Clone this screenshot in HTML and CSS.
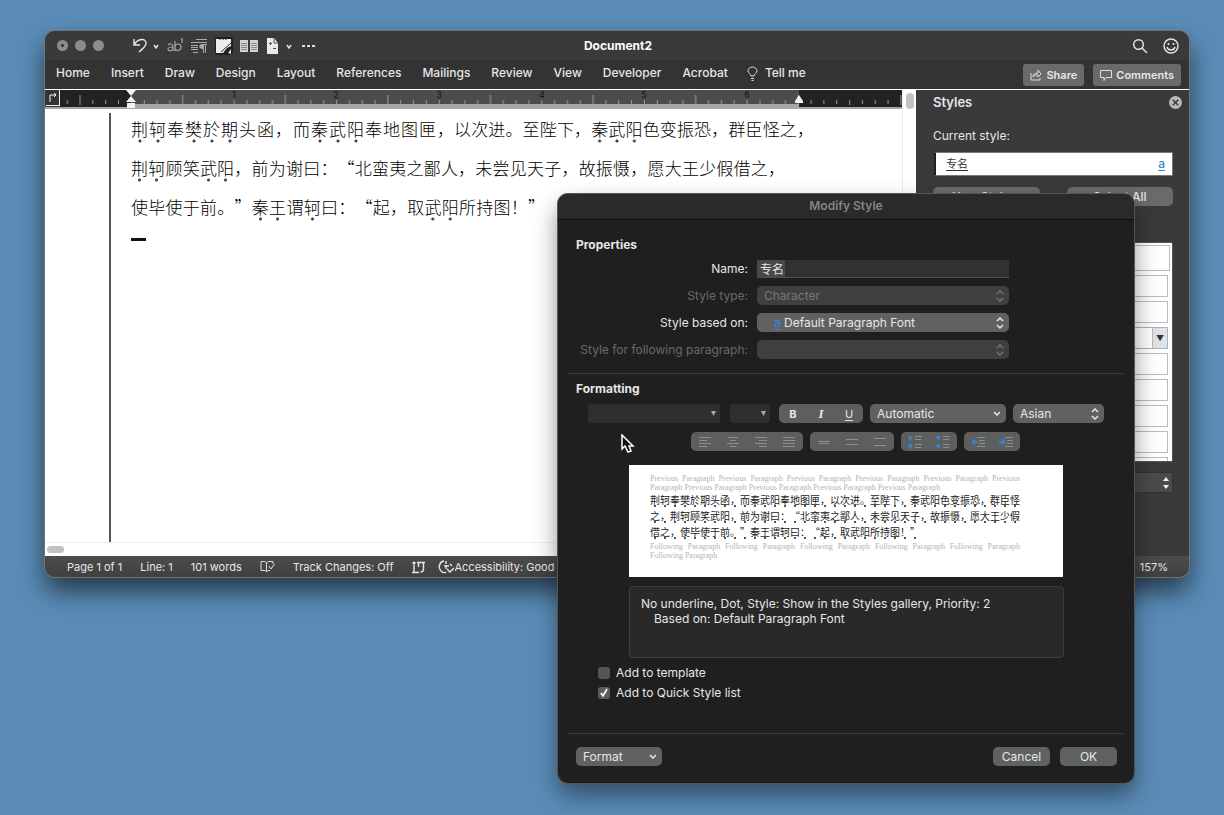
FILE: index.html
```
<!DOCTYPE html>
<html lang="en">
<head>
<meta charset="utf-8">
<title>Document2</title>
<link rel="stylesheet" href="styles.css">
</head>
<body>
<main class="desktop">
  <section class="window" aria-label="Document2">
    <header class="titlebar">
      <div class="lights"><span class="light light-edited"></span><span class="light"></span><span class="light"></span></div>
      <div class="quick">
        <button class="tool" aria-label="Undo"><svg width="26" height="18" viewBox="0 0 26 18"><path d="M1 2v6h6M1 8C5 1 13 1 13 6c0 4-4 6-7 9" class="ln"/><path d="M21 8l2 3 2-3" class="ln"/></svg></button>
        <button class="tool" aria-label="Footnote"><svg width="18" height="18" viewBox="0 0 18 18"><g class="dim"><path d="M2 8c2-2 5-1 5 1v5M7 10c-3 0-5 0-5 2s3 3 5 0M9 4v10M9 10c0-4 6-4 6 0s-6 5-6 1M15 3l1-1v4"/></g></svg></button>
        <button class="tool" aria-label="Show formatting"><svg width="17" height="18" viewBox="0 0 17 18"><path d="M5 2.500h11M0 5.500h16M0 8.500h7M0 10.500h7M0 12.500h7M2 15.500h5M12.500 7v9M14.500 7v9M10 7.500h6" class="grey"/><path d="M12 7c-5 0-5 5 0 5z" fill="#aaa"/></svg></button>
        <button class="tool tool-on" aria-label="Draw mode"><svg width="18" height="18" viewBox="0 0 18 18"><path d="M1 2h15v7l-4 2-4 5H1z" fill="#eee"/><path d="M16 6l-10 9M17 9l-7 8M17 12l-5 5M5 1v2M8 1v2M11 1v2" stroke="#222"/><path d="M13 16l3-4v5z" fill="#ddd"/></svg></button>
        <button class="tool" aria-label="Two pages"><svg width="18" height="18" viewBox="0 0 18 18"><path d="M0 3h8v12H0zM10 3h8v12h-8z" fill="#d4d4d4"/><path d="M1 6.500h6M1 8.500h6M1 10.500h6M1 12.500h6M11 6.500h6M11 8.500h6M11 10.500h6M11 12.500h6" stroke="#888"/></svg></button>
        <button class="tool" aria-label="Page settings"><svg width="28" height="18" viewBox="0 0 28 18"><path d="M2 1h7l4 5v11H2z" fill="#e8e8e8"/><path d="M9 1v5h4M4 6.500h3M5.500 5v3M8 11.500h3" stroke="#555" fill="none"/><path d="M22 8l2 3 2-3" class="ln"/></svg></button>
        <button class="tool" aria-label="More"><svg width="16" height="18" viewBox="0 0 16 18"><path d="M2 8h3v2H2zM7 8h3v2H7zM12 8h3v2h-3z" fill="#ddd"/></svg></button>
      </div>
      <h1 class="doc-title">Document2</h1>
      <div class="title-actions">
        <button class="tool" aria-label="Search"><svg width="16" height="16" viewBox="0 0 16 16"><circle cx="6.500" cy="6.500" r="4.800" class="ln"/><path d="M10 10l5 5" class="ln"/></svg></button>
        <button class="tool" aria-label="Feedback"><svg width="16" height="16" viewBox="0 0 16 16"><circle cx="8" cy="8" r="7" class="ln"/><path d="M4 9c1 4 7 4 8 0" class="ln"/><circle cx="5.500" cy="6" r="1" fill="#eee"/><circle cx="10.500" cy="6" r="1" fill="#eee"/></svg></button>
      </div>
    </header>

    <nav class="ribbon">
      <div class="tabs">
        <button>Home</button><button>Insert</button><button>Draw</button><button>Design</button><button>Layout</button><button>References</button><button>Mailings</button><button>Review</button><button>View</button><button>Developer</button><button>Acrobat</button>
      </div>
      <button class="tell"><svg width="11" height="15" viewBox="0 0 11 15"><path d="M4 10c0-2-3-3-3-5a4.500 4 0 0 1 9 0c0 2-3 3-3 5zM4 12.500h3M4.500 14.500h2" class="thin"/></svg>Tell me</button>
      <div class="ribbon-actions">
        <button class="pill"><svg width="12" height="12" viewBox="0 0 12 12"><path d="M1 4v7h9V9M3 8c0-3 2-4 5-4V1l3 4-3 3V6C6 6 4 6 3 8z" class="thin"/></svg>Share</button>
        <button class="pill"><svg width="12" height="12" viewBox="0 0 12 12"><path d="M.5 1.500h11v7H6l-2 3v-3H.5z" class="thin"/></svg>Comments</button>
      </div>
    </nav>

    <div class="workspace">
      <div class="editor">
        <div class="page-column">
          <svg class="ruler" width="858" height="19" viewBox="0 0 858 19" preserveAspectRatio="xMinYMin slice" aria-hidden="true">
            <defs>
              <pattern id="ticks" x="86" y="0" width="102.600" height="19" patternUnits="userSpaceOnUse">
                <path d="M.5 10v9M13.300 10v4M26.100 10v4M38.900 10v4M51.700 5v14M64.500 10v4M77.300 10v4M90.100 10v4" stroke="#999"/>
              </pattern>
            </defs>
            <rect width="858" height="19" fill="#222"/>
            <rect x="86" width="668" height="14" fill="#4c4c4c"/>
            <rect x="16" width="842" height="15" fill="url(#ticks)"/>
            <rect x="86" y="14" width="668" height="5" fill="#a6a6a6"/>
            <rect x="0" y="17" width="858" height="2" fill="#a6a6a6"/>
            <rect x="0" y="0" width="15" height="17" fill="#333"/>
            <path d="M14.500 0v16M1 15.500h13" stroke="#eee"/>
            <path d="M5 12V5h6M9 3l2 2-2 2" stroke="#fff" fill="none"/>
            <path d="M81 0h10l-5 6zM86 6l5 6H81zM82 13h8v5h-8z" fill="#f2f2f2"/>
            <path d="M754 5l4 6v2h-8v-2z" fill="#f2f2f2"/>
            <g class="ruler-no"><text x="189" y="8">1</text><text x="291" y="8">2</text><text x="394" y="8">3</text><text x="497" y="8">4</text><text x="599" y="8">5</text><text x="702" y="8">6</text></g>
          </svg>
          <article class="page" lang="zh-CN">
            <p class="line"><span class="run run-a"><em>荆轲</em>奉<em>樊於期</em>头函，而<em>秦武阳</em>奉地图匣，</span><span class="run run-b">以次进。至陛下，<em>秦武阳</em>色变振恐，群臣怪之，</span></p>
            <p class="line"><span class="run run-c"><em>荆轲</em>顾笑<em>武阳</em>，前为谢曰：“北蛮夷之鄙人，未尝见天子，故振慑，愿大王少假借之，</span></p>
            <p class="line"><span class="run run-d">使毕使于前。”<em>秦王</em>谓<em>轲</em>曰：“起，取<em>武阳</em>所持图！”</span></p>
            <hr class="end-mark">
          </article>
          <div class="hscroll"><span></span></div>
        </div>
        <div class="vscroll"><span></span></div>
      </div>

      <aside class="pane">
        <div class="pane-head"><h2>Styles</h2><button class="close" aria-label="Close"><svg width="13" height="13" viewBox="0 0 12 12"><circle cx="6" cy="6" r="6" fill="#b8b8b8"/><path d="M3.500 3.500l5 5M8.500 3.500l-5 5" stroke="#333" stroke-width="1.200"/></svg></button></div>
        <p class="pane-label">Current style:</p>
        <div class="current"><span class="current-name" lang="zh-CN">专名</span><span class="mark-a">a</span></div>
        <div class="pane-buttons"><button>New Style...</button><button>Select All</button></div>
        <div class="style-list">
          <div class="style-row"></div><div class="style-row"></div><div class="style-row"></div>
          <div class="style-row style-row-on"><button aria-label="Style menu">▼</button></div>
          <div class="style-row"></div><div class="style-row"></div><div class="style-row"></div><div class="style-row"></div><div class="style-row"></div>
        </div>
        <button class="list-filter" aria-label="List"><svg width="6" height="12" viewBox="0 0 6 12"><path d="M3 0l3 4H0zM3 12l3-4H0z" fill="#eee"/></svg></button>
      </aside>
    </div>

    <footer class="status">
      <span>Page 1 of 1</span><span>Line: 1</span><span>101 words</span>
      <svg width="15" height="14" viewBox="0 0 15 14"><path d="M6.500 3v9M6.500 3L5 1.500H1v9h4L6.500 12 8 10.500h2M6.500 3L8 1.500h5V4M9 6l2 3 3.500-5" class="thin"/></svg>
      <span>Track Changes: Off</span>
      <svg width="15" height="14" viewBox="0 0 15 14"><path d="M3 5v7M1 12.500h7M6 2.500h8M12.500 2v7c0 2-1 3-3 3M7.500 2v5" class="ln"/><circle cx="3" cy="3" r="1.600" fill="#eee"/></svg>
      <span class="access"><svg width="16" height="14" viewBox="0 0 16 14"><path d="M6 1C1 2 0 8 3 11c2 2 4 2 5 1M8 1v3M6 6h5M8 5v4M9 9l3 3 4-4M12 4l2 2" class="ln"/></svg>Accessibility: Good</span>
      <span class="zoom">157%</span>
    </footer>
  </section>

  <form class="dialog" aria-label="Modify Style">
    <header class="dialog-title">Modify Style</header>
    <div class="dialog-body">
      <section class="properties">
        <h3>Properties</h3>
        <div class="fields">
          <label for="name">Name:</label>
          <div class="name-box"><input id="name" value="专名" lang="zh-CN" class="name-input"></div>
          <label for="type" class="off">Style type:</label>
          <div class="select"><select id="type" disabled><option>Character</option></select><svg width="8" height="12" viewBox="0 0 8 12"><path d="M1 4l3-3 3 3M1 8l3 3 3-3"/></svg></div>
          <label for="based">Style based on:</label>
          <div class="select select-marked"><span class="mark-a">a</span><select id="based"><option>Default Paragraph Font</option></select><svg width="8" height="12" viewBox="0 0 8 12"><path d="M1 4l3-3 3 3M1 8l3 3 3-3"/></svg></div>
          <label for="following" class="off">Style for following paragraph:</label>
          <div class="select"><select id="following" disabled><option></option></select><svg width="8" height="12" viewBox="0 0 8 12"><path d="M1 4l3-3 3 3M1 8l3 3 3-3"/></svg></div>
        </div>
      </section>

      <section class="formatting">
        <h3>Formatting</h3>
        <div class="format-row">
          <div class="combo combo-font"><input aria-label="Font"><svg width="5" height="5" viewBox="0 0 5 5"><path d="M0 0h5L2.500 5z"/></svg></div>
          <div class="combo combo-size"><input aria-label="Font size"><svg width="5" height="5" viewBox="0 0 5 5"><path d="M0 0h5L2.500 5z"/></svg></div>
          <div class="segment segment-text"><button type="button"><b>B</b></button><button type="button"><i>I</i></button><button type="button"><u>U</u></button></div>
          <div class="select select-color"><select aria-label="Font color"><option>Automatic</option></select><svg width="8" height="12" viewBox="0 0 8 12"><path d="M1 4l3 3 3-3"/></svg></div>
          <div class="select select-script"><select aria-label="Script"><option>Asian</option></select><svg width="8" height="12" viewBox="0 0 8 12"><path d="M1 4l3-3 3 3M1 8l3 3 3-3"/></svg></div>
        </div>
        <div class="format-row format-row-para">
          <div class="segment">
            <button type="button" aria-label="Align left"><svg width="12" height="10" viewBox="0 0 12 10"><path d="M0 .5h12M0 3.500h8M0 6.500h12M0 9.500h8"/></svg></button>
            <button type="button" aria-label="Center"><svg width="12" height="10" viewBox="0 0 12 10"><path d="M1 .5h10M3 3.500h6M0 6.500h12M3 9.500h6"/></svg></button>
            <button type="button" aria-label="Align right"><svg width="12" height="10" viewBox="0 0 12 10"><path d="M0 .5h12M4 3.500h8M0 6.500h12M4 9.500h8"/></svg></button>
            <button type="button" aria-label="Justify"><svg width="12" height="10" viewBox="0 0 12 10"><path d="M0 .5h12M0 3.500h12M0 6.500h12M0 9.500h12"/></svg></button>
          </div>
          <div class="segment">
            <button type="button" aria-label="Single spacing"><svg width="12" height="10" viewBox="0 0 12 10"><path d="M0 4.500h12M1 6.500h10"/></svg></button>
            <button type="button" aria-label="1.5 spacing"><svg width="12" height="10" viewBox="0 0 12 10"><path d="M0 2.500h12M0 7.500h12"/></svg></button>
            <button type="button" aria-label="Double spacing"><svg width="12" height="10" viewBox="0 0 12 10"><path d="M0 1.500h12M0 8.500h12"/></svg></button>
          </div>
          <div class="segment">
            <button type="button" aria-label="Decrease paragraph spacing"><svg width="14" height="14" viewBox="0 0 14 14"><path d="M7 1.500h7M7 4.500h6M7 9.500h7M7 12.500h6"/><path class="blue" d="M0 3l2-3 3 3-3 3zM0 11l2-3 3 3-3 3z"/></svg></button>
            <button type="button" aria-label="Increase paragraph spacing"><svg width="14" height="14" viewBox="0 0 14 14"><path d="M7 1.500h7M7 4.500h6M7 9.500h7M7 12.500h6"/><path class="blue" d="M0 2l2-2 3 2-3 4zM0 11l2-3 3 3-3 3z"/></svg></button>
          </div>
          <div class="segment">
            <button type="button" aria-label="Decrease indent"><svg width="14" height="10" viewBox="0 0 14 10"><path d="M6 .5h8M8 3.500h6M8 6.500h6M6 9.500h8"/><path class="blue" d="M0 5l4-4v3h3v2H4v3z"/></svg></button>
            <button type="button" aria-label="Increase indent"><svg width="14" height="10" viewBox="0 0 14 10"><path d="M6 .5h8M8 3.500h6M8 6.500h6M6 9.500h8"/><path class="blue" d="M7 5L3 1v3H0v2h3v3z"/></svg></button>
          </div>
        </div>

        <div class="preview">
          <p class="ghost">Previous Paragraph Previous Paragraph Previous Paragraph Previous Paragraph Previous Paragraph Previous Paragraph Previous Paragraph Previous Paragraph Previous Paragraph Previous Paragraph</p>
          <p class="sample" lang="zh-CN"><span>荆轲奉樊於期头函，而秦武阳奉地图匣，以次进。至陛下，秦武阳色变振恐，群臣怪<br>之，荆轲顾笑武阳，前为谢曰：“北蛮夷之鄙人，未尝见天子，故振慑，愿大王少假<br>借之，使毕使于前。”秦王谓轲曰：“起，取武阳所持图！”</span></p>
          <p class="ghost">Following Paragraph Following Paragraph Following Paragraph Following Paragraph Following Paragraph Following Paragraph</p>
        </div>
        <div class="summary"><p>No underline, Dot, Style: Show in the Styles gallery, Priority: 2</p><p class="summary-base">Based on: Default Paragraph Font</p></div>
        <div class="checks">
          <label><input type="checkbox">Add to template</label>
          <label><input type="checkbox" checked>Add to Quick Style list</label>
        </div>
      </section>

      <footer class="dialog-actions">
        <div class="select select-format"><select aria-label="Format"><option>Format</option></select><svg width="8" height="12" viewBox="0 0 8 12"><path d="M1 4l3 3 3-3"/></svg></div>
        <button type="button" class="action">Cancel</button>
        <button type="button" class="action">OK</button>
      </footer>
    </div>
  </form>

  <svg class="cursor" width="14" height="20" viewBox="0 0 14 20" aria-hidden="true"><path d="M1 1v14l3-3 3 6 3-1-2-5h4z" fill="#111" stroke="#fff" stroke-width="1.500"/></svg>
</main>
</body>
</html>
```
FILE: styles.css
```
* { box-sizing: border-box; }
body, h1, h2, h3, p { margin: 0; }
body { background: #5a8cb7; font: 12px/16px Inter, "Noto Sans CJK SC", sans-serif; color: #e6e6e6; }
button, input, select { font: inherit; color: inherit; border: 0; padding: 0; margin: 0; background: none; }
svg { display: block; flex: none; }
.desktop { position: relative; min-height: 100vh; overflow: hidden; }

.ln { fill: none; stroke: #e6e6e6; stroke-width: 1.4; }
.thin { fill: none; stroke: #ddd; }
.dim { fill: none; stroke: #a4a4a4; stroke-width: 1.2; }
.grey { fill: none; stroke: #aaa; }

/* Document window */
.window {
  position: absolute; top: 31px; left: 45px; right: 35px; bottom: 238px;
  display: flex; flex-direction: column; overflow: hidden;
  background: #383838; border-radius: 10px;
  box-shadow: 0 0 0 1px #6f7478, 0 14px 26px rgba(0, 0, 0, .6);
}
.titlebar { display: grid; grid-template-columns: 1fr auto 1fr; align-items: center; height: 29px; padding: 0 10px 0 12px; background: #3a3a3a; }
.lights { grid-column: 1; grid-row: 1; display: flex; gap: 7px; }
.light { width: 11px; height: 11px; border-radius: 50%; background: #8c8c8c; }
.light-edited { background: radial-gradient(circle, #333 0 1px, #8c8c8c 2px); }
.quick { grid-column: 1; grid-row: 1; display: flex; align-items: center; gap: 7px; margin-left: 76px; }
.tool-on { background: #1f1f1f; border-radius: 3px; }
.doc-title { grid-column: 2; font-size: 12px; line-height: 16px; font-weight: 700; color: #fff; }
.title-actions { grid-column: 3; display: flex; justify-content: flex-end; gap: 15px; }

.ribbon { display: flex; align-items: center; height: 30px; padding: 0 8px 3px 11px; background: #333; border-bottom: 1px solid #fff; font-weight: 500; }
.tabs { display: flex; gap: 21px; }
.tell { display: flex; align-items: center; gap: 7px; margin-left: 19px; }
.ribbon-actions { display: flex; gap: 9px; margin-left: auto; padding-top: 3px; }
.pill { display: flex; align-items: center; gap: 4px; height: 22px; padding: 0 7px; border-radius: 3px; background: #6a6a6a; font-weight: 600; font-size: 11px; }

.workspace { flex: 1; display: flex; min-height: 0; }
.editor { flex: 1; display: flex; min-width: 0; background: #fff; }
.page-column { flex: 1; display: flex; flex-direction: column; min-width: 0; }
.ruler { width: 100%; height: 19px; }
.ruler-no { font: 9px Inter, sans-serif; fill: #111; text-anchor: middle; }
.page { flex: 1; margin: 4px 0 0 64px; padding-left: 20px; border-left: 2px solid #555; color: #000; font: 300 17px/31px "Noto Sans CJK SC", sans-serif; text-spacing-trim: space-all; }
.line { height: 39px; white-space: nowrap; }
.run { display: inline-block; vertical-align: top; white-space: normal; height: 31px; text-align: justify; text-align-last: justify; text-justify: inter-character; }
.run-a { width: 323px; }
.run-b { width: 360px; }
.run-c { width: 654px; }
.run-d { width: 414px; }
.line em { font-style: normal; padding-bottom: 5px; background: radial-gradient(circle at 50% 25px, #444 0 1px, transparent 2px) 0 0 / 17px 29px round no-repeat; }
.end-mark { width: 15px; height: 3px; margin: 8px 0 0; border: 0; background: #111; }
.hscroll { height: 14px; padding: 3px 2px; border-top: 1px solid #eee; }
.hscroll span { display: block; width: 17px; height: 7px; border-radius: 4px; background: #c2c2c2; }
.vscroll { width: 14px; padding: 3px 3px; border-left: 1px solid #eee; }
.vscroll span { display: block; width: 8px; height: 16px; border-radius: 4px; background: #c2c2c2; }

.pane { width: 273px; padding: 4px 16px 0 17px; background: #3a3a3a; }
.pane-head { display: flex; align-items: center; justify-content: space-between; margin-right: -9px; }
.pane h2 { font-size: 13px; line-height: 17px; font-weight: 600; }
.close { border-radius: 50%; }
.pane-label { margin-top: 17px; }
.current { display: flex; justify-content: space-between; align-items: center; height: 24px; margin: 8px 0 0 1px; padding: 0 7px 0 10px; background: #fff; color: #333; border: 1px solid #777; border-left: 2px solid #222; }
.current-name { font-size: 11px; text-decoration: underline; text-underline-offset: 2px; }
.mark-a { color: #3c82c8; font-size: 12px; font-weight: 500; text-decoration: underline; text-underline-offset: 2px; }
.pane-buttons { display: grid; grid-template-columns: 1fr 1fr; gap: 27px; margin-top: 11px; }
.pane-buttons button { height: 19px; border-radius: 5px; background: #6a6a6a; font-weight: 500; }
.style-list { display: flex; flex-direction: column; gap: 4px; height: 220px; margin-top: 36px; padding: 2px 4px 0 2px; overflow: hidden; background: #fff; border: 1px solid #555; }
.style-row { flex: none; height: 22px; border: 1px solid #bbb; }
.style-row:first-child { height: 26px; margin-right: -2px; }
.style-row-on { display: flex; justify-content: flex-end; border-color: #9db4cc; }
.style-row-on button { width: 15px; background: #e2e2e2; color: #333; font-size: 8px; border-left: 1px solid #bbb; }
.list-filter { display: flex; justify-content: flex-end; align-items: center; width: 100%; height: 21px; margin-top: 10px; padding-right: 3px; background: #4b4b4b; border: 1px solid #333; }

.status { display: flex; align-items: center; gap: 18px; height: 21px; padding: 0 21px 0 22px; background: linear-gradient(#4c4c4c, #404040); font-size: 11px; white-space: nowrap; }
.access { display: flex; align-items: center; gap: 0; margin-left: -6px; }
.zoom { margin-left: auto; }

/* Modify Style dialog */
.dialog {
  position: absolute; top: 194px; left: 558px; right: 90px;
  background: #1f1f1f; border-radius: 10px; overflow: hidden;
  box-shadow: 0 0 0 1px #555, 0 12px 24px rgba(0, 0, 0, .45);
}
.dialog-title { height: 26px; background: #2a2a2a; border-bottom: 1px solid #0c0c0c; text-align: center; line-height: 24px; font-weight: 600; color: #858585; }
.dialog-body { padding: 17px 10px 0; }
.dialog h3 { font-size: 12px; line-height: 16px; font-weight: 700; padding-left: 8px; }
.properties { padding-bottom: 14px; border-bottom: 1px solid #3a3a3a; }
.fields { display: grid; grid-template-columns: 180px 252px; gap: 8px 9px; align-items: center; margin-top: 6px; }
.fields label { text-align: right; white-space: nowrap; line-height: 19px; }
.fields label.off { color: #6a6a6a; }
.name-box { height: 18px; background: #313131; border-bottom: 1px solid #505050; }
.name-input { display: block; width: 28px; height: 17px; padding-left: 3px; background: #484848; font-family: "Noto Sans CJK SC", sans-serif; }
.select { position: relative; display: flex; align-items: center; height: 19px; border-radius: 5px; background: #606262; }
.select select { appearance: none; width: 100%; height: 19px; padding: 0 20px 0 7px; line-height: 19px; opacity: 1; }
.select svg { position: absolute; right: 5px; fill: none; stroke: #eee; stroke-width: 1.4; pointer-events: none; }
.select:has(select:disabled) { background: #3f3f3f; color: #777; }
.select:has(select:disabled) svg { stroke: #777; }
.select-marked .mark-a { position: absolute; left: 17px; font-weight: 600; line-height: 17px; }
.select-marked select { padding-left: 27px; }

.formatting { padding-top: 7px; }
.format-row { display: flex; align-items: center; gap: 7px; margin: 7px 0 0 20px; }
.format-row-para { margin: 9px 0 0 123px; }
.combo { display: flex; align-items: center; height: 19px; padding-right: 4px; border-radius: 3px; background: #2f2f2f; fill: #aaa; }
.combo input { flex: 1; min-width: 0; height: 19px; }
.combo-font { width: 132px; margin-right: 3px; }
.combo-size { width: 40px; margin-right: 2px; }
.segment { display: flex; height: 19px; border-radius: 5px; background: #5d5f5f; }
.segment button { display: flex; align-items: center; justify-content: center; width: 28px; }
.segment button svg { fill: none; stroke: #8e8e8e; }
.segment button .blue { fill: #3b7fc4; stroke: none; }
.segment-text i { font-family: "Liberation Serif", serif; font-weight: 700; font-size: 13px; }
.segment-text b { font-size: 11px; }
.segment-text u { font-size: 11px; text-underline-offset: 2px; }
.select-color { width: 136px; }
.select-script { width: 91px; }

.preview { min-height: 112px; margin: 14px 61px 0 61px; padding: 9px 43px 0 21px; background: #fff; }
.ghost { color: #b4b4b4; font: 8px/9px "Liberation Serif", serif; text-align: justify; }
.sample { margin: 0 0 2px; color: #222; font: 10px/16px "Noto Sans CJK SC", sans-serif; white-space: nowrap; text-spacing-trim: space-all; }
.sample span { background: radial-gradient(circle at 5px 14px, #555 0 1px, transparent 1px) 0 0 / 10px 15px repeat-x; -webkit-box-decoration-break: clone; box-decoration-break: clone; padding-bottom: 1px; }
.summary { height: 72px; margin: 9px 60px 0 61px; padding: 9px 11px; border: 1px solid #3e3e3e; border-radius: 4px; background: #292929; line-height: 15px; }
.summary-base { padding-left: 13px; }
.checks { display: flex; flex-direction: column; gap: 4px; margin: 7px 0 0 30px; }
.checks label { display: flex; align-items: center; gap: 6px; }
.checks input { appearance: none; width: 12px; height: 12px; border-radius: 3px; background: #555; }
.checks input:checked { background: #5c5c5c url("data:image/svg+xml,%3Csvg xmlns='http://www.w3.org/2000/svg' viewBox='0 0 12 12'%3E%3Cpath d='M3 6l2 3 4-7' fill='none' stroke='white' stroke-width='1.700'/%3E%3C/svg%3E"); }
.dialog-actions { display: flex; gap: 10px; margin-top: 32px; padding: 13px 7px 17px 8px; border-top: 1px solid #3a3a3a; }
.select-format { width: 86px; margin-right: auto; }
.action { height: 19px; width: 57px; border-radius: 5px; background: #606262; }
.cursor { position: absolute; left: 621px; top: 434px; }
```
